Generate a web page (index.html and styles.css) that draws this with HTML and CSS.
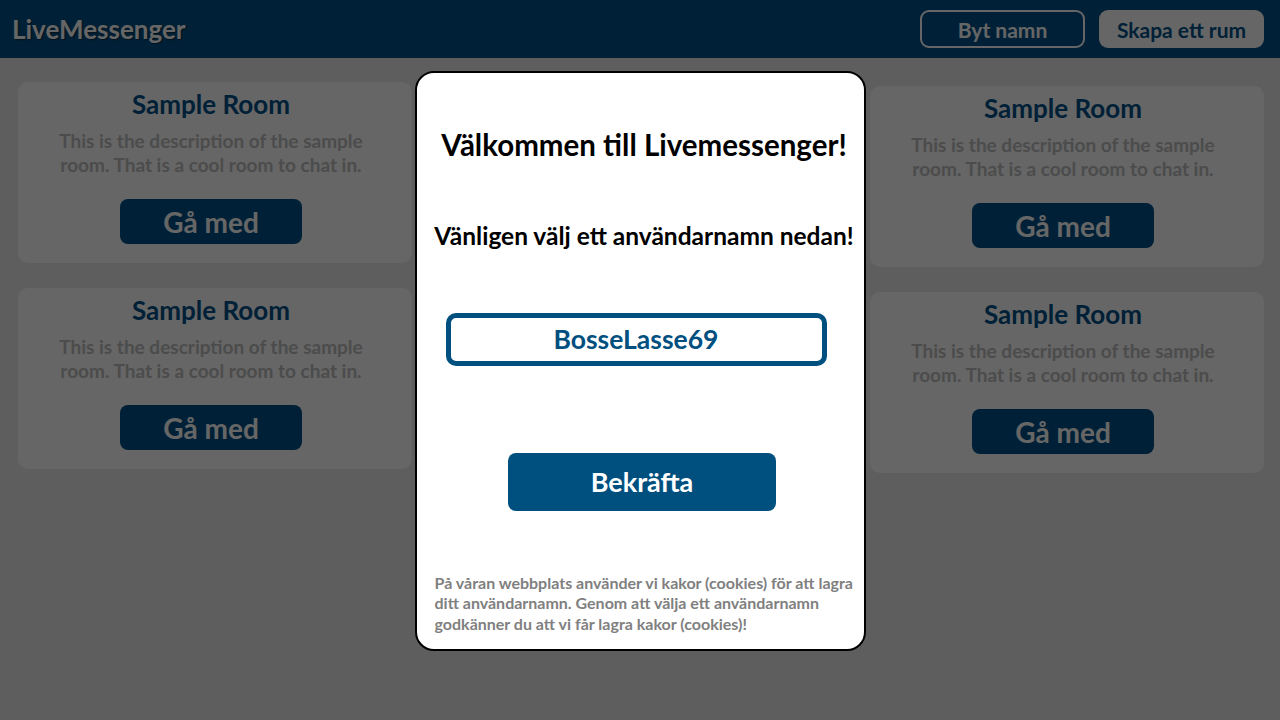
FILE: index.html
```html
<!DOCTYPE html>
<html lang="sv">
<head>
<meta charset="utf-8">
<title>LiveMessenger</title>
<link rel="stylesheet" href="styles.css">
</head>
<body>
<header class="topbar">
  <div class="brand">LiveMessenger</div>
  <nav class="actions">
    <button class="btn-outline">Byt namn</button>
    <button class="btn-light">Skapa ett rum</button>
  </nav>
</header>
<main class="rooms">
  <div class="col">
    <div class="card"><h2>Sample Room</h2><p>This is the description of the sample room. That is a cool room to chat in.</p><button class="join">Gå med</button></div>
    <div class="card"><h2>Sample Room</h2><p>This is the description of the sample room. That is a cool room to chat in.</p><button class="join">Gå med</button></div>
  </div>
  <div class="col"></div>
  <div class="col col-right">
    <div class="card"><h2>Sample Room</h2><p>This is the description of the sample room. That is a cool room to chat in.</p><button class="join">Gå med</button></div>
    <div class="card"><h2>Sample Room</h2><p>This is the description of the sample room. That is a cool room to chat in.</p><button class="join">Gå med</button></div>
  </div>
</main>
<div class="overlay">
  <div class="modal">
    <h1>Välkommen till Livemessenger!</h1>
    <h3>Vänligen välj ett användarnamn nedan!</h3>
    <div class="name-input">BosseLasse69</div>
    <button class="confirm">Bekräfta</button>
    <p class="cookie">På våran webbplats använder vi kakor (cookies) för att lagra ditt användarnamn. Genom att välja ett användarnamn godkänner du att vi får lagra kakor (cookies)!</p>
  </div>
</div>
</body>
</html>
```
FILE: styles.css
```css
* { box-sizing: border-box; }
html, body { margin: 0; padding: 0; }
body {
  width: 1280px;
  height: 720px;
  overflow: hidden;
  background: #ececec;
  font-family: "Lato", "Noto Sans", sans-serif;
  font-weight: 700;
}
button { font-family: inherit; font-weight: 700; cursor: pointer; }

.topbar {
  height: 58px;
  background: #005289;
  display: flex;
  align-items: center;
  justify-content: space-between;
  padding: 0 16px 0 12px;
}
.brand {
  color: #ffffff;
  font-size: 26px;
  text-shadow: 1px 1px 2px rgba(0,0,0,0.5);
}
.actions { display: flex; gap: 14px; }
.btn-outline, .btn-light {
  width: 165px;
  height: 38px;
  border-radius: 9px;
  font-size: 21px;
  padding: 0;
}
.btn-outline {
  background: transparent;
  border: 2px solid #ffffff;
  color: #ffffff;
}
.btn-light {
  background: #ffffff;
  border: none;
  color: #005289;
}

.rooms {
  display: grid;
  grid-template-columns: 394px 394px 394px;
  column-gap: 32px;
  padding: 24px 16px 0 18px;
}
.col { display: flex; flex-direction: column; gap: 25px; }
.col-right { padding-top: 4px; }
.card {
  background: #ffffff;
  border-radius: 10px;
  height: 181px;
  display: flex;
  flex-direction: column;
  align-items: center;
  padding: 7px 8px 0 0;
}
.card h2 {
  margin: 0;
  font-size: 26px;
  line-height: 30px;
  color: #005289;
}
.card p {
  margin: 10px 0 0;
  width: 340px;
  text-align: center;
  font-size: 19px;
  line-height: 24px;
  color: #bdbdbd;
}
.join {
  margin-top: 22px;
  width: 182px;
  height: 45px;
  border: none;
  border-radius: 8px;
  background: #005289;
  color: #ffffff;
  font-size: 28px;
  padding: 0;
}

.overlay {
  position: fixed;
  inset: 0;
  background: rgba(0,0,0,0.6);
  display: flex;
  align-items: center;
  justify-content: center;
}
.modal {
  width: 451px;
  height: 580px;
  background: #ffffff;
  border: 2px solid #000000;
  border-radius: 19px;
  display: flex;
  flex-direction: column;
  align-items: center;
  padding: 0 6px 0 14px;
  margin-top: 1px;
}
.modal > * { flex-shrink: 0; }
.modal h1 {
  margin: 55px 0 0;
  font-size: 29.5px;
  line-height: 34px;
  color: #000;
  white-space: nowrap;
}
.modal h3 {
  margin: 60px 0 0;
  font-size: 24.5px;
  line-height: 28px;
  color: #000;
  white-space: nowrap;
}
.name-input {
  margin-top: 63px;
  margin-right: 16px;
  width: 381px;
  height: 53px;
  border: 5px solid #00507f;
  border-radius: 10px;
  display: flex;
  align-items: center;
  justify-content: center;
  color: #00507f;
  font-size: 26.5px;
}
.confirm {
  margin-top: 87px;
  margin-right: 4px;
  width: 268px;
  height: 58px;
  border: none;
  border-radius: 8px;
  background: #00507f;
  color: #ffffff;
  font-size: 27px;
  padding: 0;
}
.cookie {
  margin: 62px 0 0;
  padding-left: 4px;
  align-self: stretch;
  font-size: 16px;
  line-height: 20.5px;
  color: #808080;
}
```
